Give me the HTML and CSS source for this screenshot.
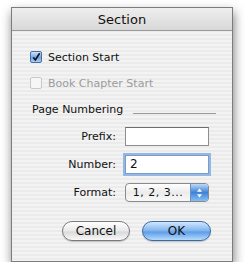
FILE: index.html
```html
<!DOCTYPE html>
<html lang="en">
<head>
  <meta charset="UTF-8" />
  <title>Section</title>
  <link rel="stylesheet" href="styles.css">
</head>
<body>

  <div class="window">
    <div class="title-bar">Section</div>

    <div class="content">
      <label class="check-row">
        <span class="checkbox checked">
          <svg width="11" height="11" viewBox="0 0 11 11"><path d="M2.5 5.5 L4.8 8.2 L9.5 0.8" fill="none" stroke="#111" stroke-width="1.8"/></svg>
        </span>
        Section Start
      </label>
      <label class="check-row disabled">
        <span class="checkbox"></span>
        Book Chapter Start
      </label>

      <div class="group-title">
        <span>Page Numbering</span>
        <span class="rule"></span>
      </div>

      <div class="form">
        <div class="label">Prefix:</div>
        <div class="field"></div>
        <div class="label">Number:</div>
        <div class="field focused">2</div>
        <div class="label">Format:</div>
        <div class="popup">
          <span class="popup-text">1, 2, 3...</span>
          <span class="popup-arrows">
            <svg width="7" height="10" viewBox="0 0 7 10"><path d="M3.5 0.5 L6 3.8 L1 3.8 Z M3.5 9.5 L6 6.2 L1 6.2 Z" fill="#fff"/></svg>
          </span>
        </div>
      </div>

      <div class="buttons">
        <button class="btn">Cancel</button>
        <button class="btn default">OK</button>
      </div>
    </div>
  </div>

</body>
</html>
```

FILE: styles.css
```css
body {
  margin: 0;
  background-color: #fff;
  font-family: "DejaVu Sans", sans-serif;
  font-size: 11px;
  color: #111;
}
.window {
  margin: 7px 0 0 11px;
  width: 220px;
  height: 253px;
  border: 1px solid #7c7c7c;
  background: repeating-linear-gradient(to bottom, #f3f3f3 0, #f3f3f3 2px, #ebebeb 2px, #ebebeb 4px);
  box-shadow: 1px 5px 10px rgba(0, 0, 0, 0.5);
}
.title-bar {
  height: 22px;
  line-height: 23px;
  text-align: center;
  font-size: 13px;
  background: linear-gradient(#eeeeee, #d8d8d8);
  border-bottom: 1px solid #9a9a9a;
}
.content {
  padding: 20px 0 0 18px;
}
.check-row {
  display: flex;
  align-items: center;
  gap: 6px;
  height: 12px;
  margin-bottom: 14px;
}
.check-row.disabled {
  color: #9c9c9c;
}
.checkbox {
  width: 10px;
  height: 10px;
  border: 1px solid #8c8c8c;
  border-radius: 2px;
  background: linear-gradient(#fdfdfd, #e2e2e2);
  display: flex;
  align-items: center;
  justify-content: center;
}
.checkbox.checked {
  border-color: #4a6fa6;
  background: linear-gradient(#cfe3fb, #6fa3e6 55%, #a9cff8);
}
.disabled .checkbox {
  border-color: #c8c8c8;
  background: #f6f6f6;
}
.group-title {
  display: flex;
  align-items: center;
  gap: 10px;
  margin-top: 5px;
  margin-left: 2px;
}
.group-title .rule {
  width: 83px;
  border-top: 1px solid #9a9a9a;
  margin-top: 7px;
}
.form {
  display: grid;
  grid-template-columns: 86px 84px;
  column-gap: 9px;
  row-gap: 9px;
  align-items: center;
  margin-top: 11px;
}
.label {
  text-align: right;
}
.field {
  height: 17px;
  border: 1px solid #8e8e8e;
  border-top-color: #6c6c6c;
  background-color: #fff;
  line-height: 17px;
  padding-left: 4px;
  font-size: 12px;
}
.field.focused {
  box-shadow: 0 0 0 2px #93b8e6;
  border-color: #7a9cc9;
}
.popup {
  height: 17px;
  border: 1px solid #8a8a8a;
  border-radius: 4px;
  background: linear-gradient(#ffffff, #ececec 50%, #f8f8f8);
  display: flex;
  overflow: hidden;
}
.popup-text {
  flex: 1;
  text-align: center;
  line-height: 17px;
  letter-spacing: 0.5px;
}
.popup-arrows {
  width: 17px;
  display: flex;
  align-items: center;
  justify-content: center;
  background: linear-gradient(#bcd9fa, #3f83d9 50%, #84bff5);
  border-left: 1px solid #6d8fbd;
}
.buttons {
  display: flex;
  gap: 12px;
  margin-top: 19px;
  margin-left: 32px;
}
.btn {
  width: 68px;
  height: 20px;
  border: 1px solid #7b7b7b;
  border-radius: 10px;
  background: linear-gradient(#ffffff, #e8e8e8 50%, #d9d9d9 55%, #f9f9f9);
  font-family: "DejaVu Sans", sans-serif;
  font-size: 12px;
  color: #111;
  padding: 0;
  box-shadow: 0 1px 1px rgba(0, 0, 0, 0.2);
}
.btn.default {
  width: 69px;
  border-color: #3f6aa3;
  background: linear-gradient(#d3e7fd, #7cb2ee 50%, #5c9ce8 55%, #b5dbfd);
}
```
